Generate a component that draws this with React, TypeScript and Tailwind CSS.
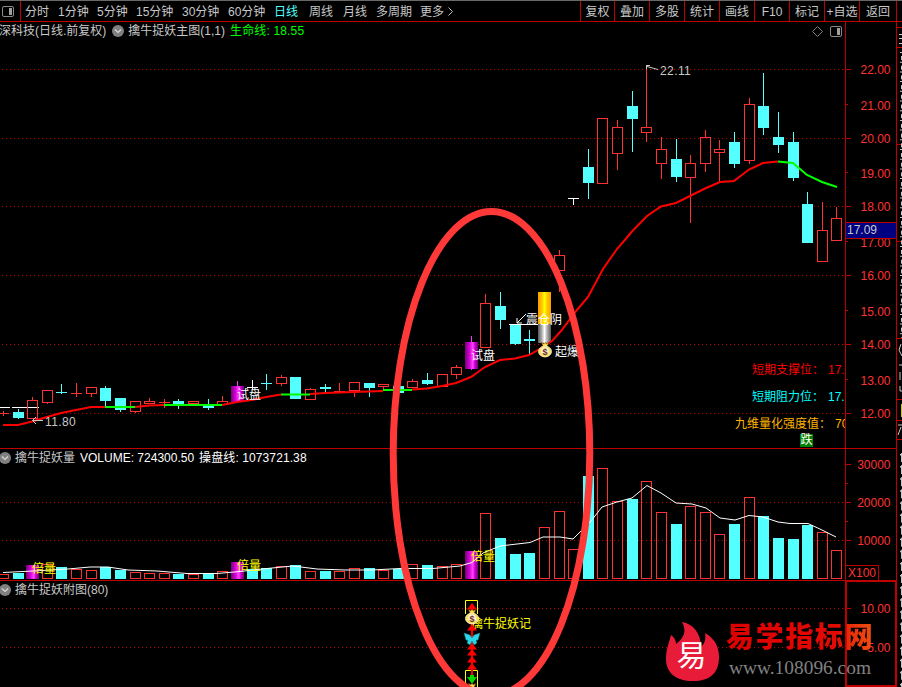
import clsx from "clsx";

type Kind = "up" | "down" | "magenta" | "white" | "gold";

// x centre, kind, high, body top, body bottom, low, top of the volume bar
type Bar = [number, Kind, number, number, number, number, number];

const BARS: Bar[] = [
  [3.5, "up", 411, 413, 414, 416, 574],
  [18.5, "down", 409, 412, 418, 419, 573],
  [32.5, "up", 397, 400, 419, 419, 565],
  [47.5, "up", 390, 390, 403, 404, 564],
  [61.5, "down", 384, 392, 393, 394, 567],
  [76.5, "up", 383, 393, 394, 397, 569],
  [91.5, "up", 387, 387, 394, 397, 570],
  [105.5, "down", 386, 388, 401, 406, 567],
  [120.5, "down", 398, 398, 410, 412, 570],
  [135.5, "up", 401, 401, 412, 413, 572],
  [149.5, "up", 398, 401, 404, 404, 573],
  [164.5, "up", 399, 402, 403, 408, 573],
  [178.5, "down", 399, 401, 404, 409, 574],
  [193.5, "up", 401, 401, 404, 405, 574],
  [208.5, "down", 399, 406, 408, 410, 574],
  [222.5, "up", 396, 401, 405, 405, 571],
  [237.5, "magenta", 381, 386, 402, 402, 562],
  [252.5, "white", 380, 387, 388, 390, 569],
  [266.5, "down", 374, 383, 384, 390, 568],
  [281.5, "up", 375, 377, 384, 386, 566],
  [295.5, "down", 377, 377, 399, 399, 565],
  [310.5, "up", 388, 389, 400, 400, 571],
  [325.5, "down", 384, 387, 389, 392, 571],
  [339.5, "up", 383, 391, 392, 392, 571],
  [354.5, "up", 382, 382, 391, 397, 568],
  [369.5, "down", 383, 383, 388, 397, 568],
  [383.5, "up", 384, 384, 387, 390, 570],
  [398.5, "down", 386, 386, 393, 393, 569],
  [412.5, "up", 379, 381, 388, 388, 564],
  [427.5, "down", 373, 380, 384, 385, 565],
  [442.5, "up", 374, 374, 387, 387, 566],
  [456.5, "up", 365, 367, 375, 379, 564],
  [471.5, "magenta", 336, 342, 369, 370, 551],
  [485.5, "up", 294, 303, 348, 348, 513],
  [500.5, "down", 292, 306, 320, 329, 538],
  [515.5, "down", 325, 325, 344, 345, 554],
  [529.5, "down", 330, 339, 341, 354, 553],
  [544.5, "gold", 292, 292, 343, 343, 527],
  [559.5, "up", 250, 255, 271, 292, 511],
  [573.5, "white", 198, 198, 199, 205, 549],
  [588.5, "down", 149, 167, 183, 199, 476],
  [602.5, "up", 118, 118, 184, 184, 468],
  [617.5, "up", 120, 127, 154, 170, 501],
  [632.5, "down", 91, 106, 119, 152, 499],
  [646.5, "up", 67, 127, 133, 142, 481],
  [661.5, "up", 137, 149, 164, 179, 512],
  [676.5, "down", 139, 159, 177, 182, 524],
  [690.5, "up", 155, 163, 178, 223, 506],
  [705.5, "up", 130, 137, 164, 172, 512],
  [719.5, "up", 140, 149, 153, 182, 534],
  [734.5, "down", 132, 142, 164, 168, 524],
  [749.5, "up", 98, 104, 161, 164, 497],
  [763.5, "down", 73, 106, 128, 135, 516],
  [778.5, "down", 112, 137, 145, 153, 538],
  [793.5, "down", 132, 142, 178, 181, 539],
  [807.5, "down", 192, 204, 243, 243, 525],
  [822.5, "up", 202, 230, 262, 262, 532],
  [836.5, "up", 207, 218, 241, 241, 550],
];

const COLORS: Record<Kind, string> = {
  up: "#ff3232",
  down: "#54ffff",
  magenta: "#ff32ff",
  white: "#ffffff",
  gold: "#ffb400",
};

const PERIODS: [string, string][] = [
  ["分时", "w-[33px]"],
  ["1分钟", "w-[39px]"],
  ["5分钟", "w-[39px]"],
  ["15分钟", "w-[46px]"],
  ["30分钟", "w-[46px]"],
  ["60分钟", "w-[46px]"],
  ["日线", "w-[35px]"],
  ["周线", "w-[34px]"],
  ["月线", "w-[33px]"],
  ["多周期", "w-[44px]"],
  ["更多", "w-[28px]"],
];

const TOOLS: [string, string][] = [
  ["复权", "w-[34px]"],
  ["叠加", "w-[35px]"],
  ["多股", "w-[35px]"],
  ["统计", "w-[35px]"],
  ["画线", "w-[35px]"],
  ["F10", "w-[35px]"],
  ["标记", "w-[35px]"],
  ["+自选", "w-[35px]"],
  ["返回", "w-[37px]"],
];

// tick position, label position, text
const PRICES: [number, number, string][] = [
  [69, 69, "22.00"],
  [104, 105, "21.00"],
  [138, 138, "20.00"],
  [172, 173, "19.00"],
  [206, 206, "18.00"],
  [241, 242, "17.00"],
  [275, 275, "16.00"],
  [310, 311, "15.00"],
  [344, 344, "14.00"],
  [379, 380, "13.00"],
  [413, 413, "12.00"],
];

const RED_MA = [
  "3,425 18,425 32,421.5 47,417 61,413 76,410 91,407 105,407",
  "135,407 149,405.5 164,405",
  "222,405 237,402 252,400 266,397 281,394.5",
  "310,394 325,393 354,392 383,391",
  "412,389.5 427,388.5 442,386 456,383 471,377 485,367 500,360 515,358.5 529,355 538,350 552,341 561,331 577,310 588,297 603,269 617,249 632,231.5 647,216 661,206.5 676,203 690,196 705,188.5 720,182 734,181 749,169.5 763,163 778,161.5",
];

const GREEN_MA = [
  "105,407 135,407",
  "164,405 222,405",
  "281,394.5 310,394.5",
  "383,390 412,390",
  "778,161.5 793,163 807,175 822,182 837,187",
];

const VOLUME_MA =
  "3,572.5 33,571 68,569 90,567 108,567 128,570 157,571 187,573.5 217,573.5 240,571.5 267,568.5 293,566 317,569 345,570 372,570 400,568.5 433,568.5 460,566 472,562.5 483,553 500,546 530,542.5 543,537 560,537 573,539 591,521 602,507 617,502 632,498 647,485.5 661,493 676,503 692,504 706,508 720,518 735,520 749,515.5 763,517 778,522 790,523.5 808,523.5 822,530 836,537";

function Grid({ rows }: { rows: number[] }) {
  return (
    <g stroke="#c00000" strokeDasharray="1 3">
      {rows.map((y) => (
        <line key={y} x1="2" x2="845" y1={y + 0.5} y2={y + 0.5} />
      ))}
    </g>
  );
}

function Candle({ bar }: { bar: Bar }) {
  const [x, kind, high, top, bottom, low] = bar;
  const color = COLORS[kind];
  const flat = bottom - top <= 1;

  if (kind === "gold") {
    return (
      <g>
        <rect x={x - 6.5} y={292} width="13" height="32" fill="url(#gold)" />
        <rect x={x - 6.5} y={324} width="13" height="19" fill="url(#silver)" />
      </g>
    );
  }

  return (
    <g>
      <path d={`M${x} ${high}V${top}M${x} ${bottom}V${low}`} stroke={color} />
      {kind === "magenta" && <rect x={x - 6.5} y={top} width="13" height={bottom - top} fill="url(#magenta)" />}
      {kind !== "magenta" && (flat || kind === "down") && (
        <rect x={x - 5.5} y={top} width="11" height={bottom - top} fill={color} />
      )}
      {kind === "up" && !flat && (
        <rect x={x - 5} y={top + 0.5} width="10" height={bottom - top - 1} fill="none" stroke={color} />
      )}
    </g>
  );
}

function VolumeBar({ bar }: { bar: Bar }) {
  const [x, kind, , , , , top] = bar;
  if (kind === "magenta" || x === 32.5) {
    return <rect x={x - 6.5} y={top} width="13" height={579 - top} fill="url(#magenta)" />;
  }
  if (kind === "down" || x === 252.5) {
    return <rect x={x - 5.5} y={top} width="11" height={579 - top} fill="#54ffff" />;
  }
  return <rect x={x - 5} y={top + 0.5} width="10" height={578 - top} fill="none" stroke="#ff3232" />;
}

function Gradients() {
  return (
    <defs>
      <linearGradient id="magenta">
        <stop offset="0" stopColor="#780078" />
        <stop offset="0.35" stopColor="#d800d8" />
        <stop offset="0.6" stopColor="#ff46ff" />
        <stop offset="0.75" stopColor="#d000d0" />
        <stop offset="1" stopColor="#780078" />
      </linearGradient>
      <linearGradient id="gold">
        <stop offset="0" stopColor="#ff9c00" />
        <stop offset="0.3" stopColor="#ffc800" />
        <stop offset="0.5" stopColor="#ffff00" />
        <stop offset="0.7" stopColor="#ffc800" />
        <stop offset="1" stopColor="#ff9c00" />
      </linearGradient>
      <linearGradient id="silver">
        <stop offset="0" stopColor="#585858" />
        <stop offset="0.3" stopColor="#b0b0b0" />
        <stop offset="0.5" stopColor="#ffffff" />
        <stop offset="0.7" stopColor="#b0b0b0" />
        <stop offset="1" stopColor="#585858" />
      </linearGradient>
    </defs>
  );
}

function MoneyBag({ x, y }: { x: number; y: number }) {
  return (
    <g transform={`translate(${x} ${y})`}>
      <path d="M-3.5 -7.5L-1 -6.5L0 -7.5L1.5 -6.5L4 -7.5L2 -3.5H-2Z" fill="#ffd83c" stroke="#5a2c10" strokeWidth="0.6" />
      <ellipse cx="0" cy="1.5" rx="6.4" ry="5.4" fill="#f4e25a" stroke="#fff0c0" />
      <ellipse cx="0" cy="1" rx="4" ry="3.8" fill="#fff0d0" />
      <text x="0" y="4.6" textAnchor="middle" fontSize="9" fontWeight="bold" fill="#6e2c28">$</text>
    </g>
  );
}

function PanelIcon() {
  return (
    <svg className="shrink-0" width="12" height="11" viewBox="0 0 12 11">
      <rect x="0.5" y="0.5" width="11" height="10" rx="1.5" fill="none" stroke="#8a8a8a" />
      <rect x="7" y="2" width="3" height="7" fill="#a0a0a0" />
    </svg>
  );
}

function Collapse() {
  return (
    <svg className="shrink-0" width="12" height="12" viewBox="0 0 12 12">
      <circle cx="6" cy="6" r="6" fill="#808080" />
      <path d="M3 4.5L6 7.5L9 4.5" fill="none" stroke="#d8d8d8" strokeWidth="1.2" />
    </svg>
  );
}

function Toolbar() {
  return (
    <header className="flex h-[22px] shrink-0 border-t border-b border-t-[#686868] border-b-[#c00000] text-[#c8c8c8]">
      <div className="flex w-[21px] items-center border-r border-[#c00000] pl-[2px]">
        <PanelIcon />
      </div>
      <nav className="flex items-center pt-px pl-1">
        {PERIODS.map(([name, width]) => (
          <span key={name} className={clsx(width, name === "日线" && "text-[#54ffff]")}>
            {name}
          </span>
        ))}
        <svg width="6" height="9" viewBox="0 0 6 9">
          <path d="M0.5 0.5L4.5 4.5L0.5 8.5" fill="none" stroke="#c0c0c0" />
        </svg>
      </nav>
      <div className="ml-auto flex">
        {TOOLS.map(([name, width]) => (
          <span key={name} className={clsx(width, "flex items-center justify-center border-l border-[#c00000] pt-px")}>
            {name}
          </span>
        ))}
        <span className="w-[6px] border-l border-[#c00000]" />
      </div>
    </header>
  );
}

function MainPanel() {
  return (
    <section className="relative h-[427px] overflow-hidden border-b border-[#c00000]">
      <svg className="absolute inset-0" width="845" height="426" viewBox="0 22 845 426">
        <Gradients />
        <Grid rows={[69, 138, 206, 275, 344, 413]} />
        <path d="M0 407.5H10M12 407.5H39" stroke="#fff" />
        {BARS.map((bar) => (
          <Candle key={bar[0]} bar={bar} />
        ))}
        <g fill="none" stroke="#ff0000" strokeWidth="2">
          {RED_MA.map((points) => (
            <polyline key={points} points={points} />
          ))}
        </g>
        <g fill="none" stroke="#00ff00" strokeWidth="2">
          {GREEN_MA.map((points) => (
            <polyline key={points} points={points} />
          ))}
        </g>
        <g fill="none" stroke="#c8c8c8">
          <path d="M33 420.5H43M36 417L32.5 420.5L36 424" />
          <path d="M646.5 69V65.5M646 65.5H650M647 66.5L658 69.5" />
        </g>
        <path d="M509 324.5H538M526 314L517 323M517 318V323H522" fill="none" stroke="#fff" />
        <g fill="#c8c8c8" letterSpacing="0.4">
          <text x="45" y="426">11.80</text>
          <text x="660" y="75">22.11</text>
        </g>
        <g fill="#fff">
          <text x="237" y="399">试盘</text>
          <text x="471" y="360">试盘</text>
          <text x="526" y="324">震仓阴</text>
          <text x="555" y="356">起爆</text>
        </g>
        <MoneyBag x={545} y={350} />
      </svg>
      <div className="relative flex h-[18px] items-center text-[#c8c8c8]">
        <span className="-ml-[1px]">深科技(日线.前复权)</span>
        <span className="ml-[6px] flex items-center gap-[4px]">
          <Collapse />
          擒牛捉妖主图(1,1)
        </span>
        <span className="ml-[5px] tracking-[0.15px] text-[#00ff00]">生命线: 18.55</span>
        <span className="mr-[3px] ml-auto flex items-center gap-[7px]">
          <svg width="11" height="11" viewBox="0 0 11 11">
            <path d="M5.5 0.5L10.5 5.5L5.5 10.5L0.5 5.5Z" fill="none" stroke="#808080" />
          </svg>
          <PanelIcon />
        </span>
      </div>
      <div className="absolute top-[334px] left-[735px] whitespace-nowrap">
        <div className="flex h-[27px] items-center gap-1 pl-[17px] text-[#ff0000]">
          <span>短期支撑位：</span>17.
        </div>
        <div className="flex h-[27px] items-center gap-1 pl-[17px] text-[#00ffff]">
          <span>短期阻力位：</span>17.
        </div>
        <div className="flex h-[28px] items-center gap-1 text-[#ffb400]">
          <span>九维量化强度值：</span>70
        </div>
      </div>
      <span className="absolute top-[412px] left-[800px] h-[13px] w-[13px] bg-[#008000] text-center leading-[13px] text-white">
        跌
      </span>
    </section>
  );
}

function VolumePanel() {
  return (
    <section className="relative h-[132px] border-b border-[#c00000]">
      <svg className="absolute inset-0" width="845" height="131" viewBox="0 449 845 131">
        <Grid rows={[502, 540]} />
        {BARS.map((bar) => (
          <VolumeBar key={bar[0]} bar={bar} />
        ))}
        <polyline points={VOLUME_MA} fill="none" stroke="#fff" />
        <g fill="#ffff00">
          <text x="32" y="573">倍量</text>
          <text x="237" y="570">倍量</text>
          <text x="471" y="561">倍量</text>
        </g>
      </svg>
      <div className="relative -ml-[1px] flex h-[17px] items-center text-white">
        <Collapse />
        <span className="ml-[4px] text-[#c8c8c8]">擒牛捉妖量</span>
        <span className="ml-[5px]">VOLUME: 724300.50</span>
        <span className="ml-[5px] tracking-[0.1px]">操盘线: 1073721.38</span>
      </div>
    </section>
  );
}

function SignalPanel() {
  return (
    <section className="relative h-[106px]">
      <svg className="absolute inset-0" width="845" height="106" viewBox="0 581 845 106">
        <Grid rows={[608, 647]} />
        <g fill="none" stroke="#ffff00">
          <path d="M465.5 614V600.5H477.5V614" />
          <path d="M465.5 687V670.5H477.5V687" />
        </g>
        <text x="471" y="628" fill="#ffff00">擒牛捉妖记</text>
        <path d="M472 608V676" stroke="#ff0000" strokeWidth="2" />
        <g fill="#ff0000">
          {[603, 624, 643, 649, 656, 663].map((y) => (
            <path key={y} d={`M472 ${y}L477 ${y + 6.5}H467Z`} />
          ))}
        </g>
        <path d="M467 677H470V675H474V677H477L472 684Z" fill="#00d800" />
        <MoneyBag x={472} y={617} />
        <MoneyBag x={472} y={691} />
        <path
          d="M472 638L470 635L464 633L466 640L468 640.5L467 643L470 645L472 641L474 645L477 643L476 640.5L478 640L480 633L474 635Z"
          fill="#28d8e8"
          stroke="#107888"
          strokeWidth="0.5"
        />
      </svg>
      <div className="relative -ml-[1px] flex h-[17px] items-center text-[#c8c8c8]">
        <Collapse />
        <span className="ml-[4px]">擒牛捉妖附图(80)</span>
      </div>
    </section>
  );
}

function Axis() {
  return (
    <svg className="shrink-0" width="52" height="665" viewBox="845 22 52 665">
      <g stroke="#c00000" fill="none">
        <path d="M845.5 22V580M896.5 22V580M845 448.5H897M845 580.5H897" />
        {PRICES.map(([y], i) => (
          <path key={y} d={`M846 ${y + 0.5}H${i % 2 ? 848 : 851}`} />
        ))}
        <path d="M846 464.5H851M846 483.5H848M846 502.5H851M846 521.5H848M846 540.5H851M846 608.5H851M846 647.5H851" />
        <path d="M846 565.5H878.5V580" />
        <rect x="846" y="581" width="50" height="105" strokeWidth="2" />
      </g>
      <g fill="#ff3232" textAnchor="end">
        {PRICES.map(([, y, label]) => (
          <text key={label} x="890.5" y={y + 5}>{label}</text>
        ))}
        <text x="890.5" y="469">30000</text>
        <text x="890.5" y="507">20000</text>
        <text x="890.5" y="545">10000</text>
        <text x="890.5" y="613">10.00</text>
        <text x="890.5" y="652">5.00</text>
        <text x="876" y="577">X100</text>
      </g>
      <rect x="846" y="222" width="50" height="17" fill="#000080" />
      <path d="M846 222.5H896M846 238.5H896" stroke="#c00000" />
      <text x="847" y="234" fill="#c8c8c8">17.09</text>
    </svg>
  );
}

// Left edge of the quote list, most of it lies past the window
function QuoteEdge() {
  return (
    <svg className="shrink-0" width="5" height="665" viewBox="897 22 5 665">
      <path d="M897 27.5H902M897 47.5H902M897 144.5H902M897 241.5H902M897 338.5H902M897 399.5H902M897 420.5H902M897 439.5H902" stroke="#c00000" />
      <path d="M901 52V338" stroke="#c8c8c8" strokeWidth="2" strokeDasharray="1 8.7" />
      <path d="M901.5 56V338" stroke="#c8c8c8" strokeDasharray="4 5.7" />
      <path d="M899 34.5H902M899 38.5H902M899 43.5H902M901 344L899 350L902 356M899 365H902M900 372V380M900 386V391H902M898 425H902M901 427L898 435" fill="none" stroke="#c8c8c8" />
      <rect x="901" y="404" width="1" height="13" fill="#c8c800" />
      <path d="M901.5 453V687" stroke="#c8c8c8" strokeDasharray="9 3.1" />
      <path d="M900.5 454V687" stroke="#c8c8c8" strokeDasharray="1.5 10.6" />
    </svg>
  );
}

function Watermark() {
  return (
    <div className="absolute top-[621px] left-[665px] flex">
      <svg width="55" height="61" viewBox="665 621 55 61">
        <path
          d="M682 622C693 624 701 633 701 647C705 643 706 639 705 633C714 638 719 646 719 657C719 673 710 681 693 681C676 681 666 673 666 659C666 649 669 643 671 635C674 637 676 640 676 644C684 638 687 631 682 622Z"
          fill="#e81c38"
        />
        <text x="691.5" y="666" textAnchor="middle" fontSize="30" fill="#fff">易</text>
      </svg>
      <div className="ml-[6px] whitespace-nowrap">
        <div className="bg-linear-to-r from-[#dc0000] via-[#e40a04] via-75% to-[#f05010] bg-clip-text text-[28px] leading-[34px] font-black tracking-[1.7px] text-transparent">
          易学指标网
        </div>
        <div className="pl-[3px] font-['Liberation_Serif',serif] text-[19.4px] leading-[26px] text-[#808080]">
          www.108096.com
        </div>
      </div>
    </div>
  );
}

export default function App() {
  return (
    <div className="relative flex h-[687px] w-[902px] flex-col overflow-hidden bg-black font-['Liberation_Sans','Noto_Sans_CJK_SC',sans-serif] text-[12px] leading-[14px] whitespace-nowrap">
      <Toolbar />
      <main className="flex">
        <div className="w-[845px] shrink-0">
          <MainPanel />
          <VolumePanel />
          <SignalPanel />
        </div>
        <Axis />
        <QuoteEdge />
      </main>
      <svg className="pointer-events-none absolute inset-0" width="902" height="687">
        <ellipse cx="491.5" cy="453.5" rx="98.3" ry="242" fill="none" stroke="#ff3838" strokeWidth="7" />
      </svg>
      <Watermark />
    </div>
  );
}
